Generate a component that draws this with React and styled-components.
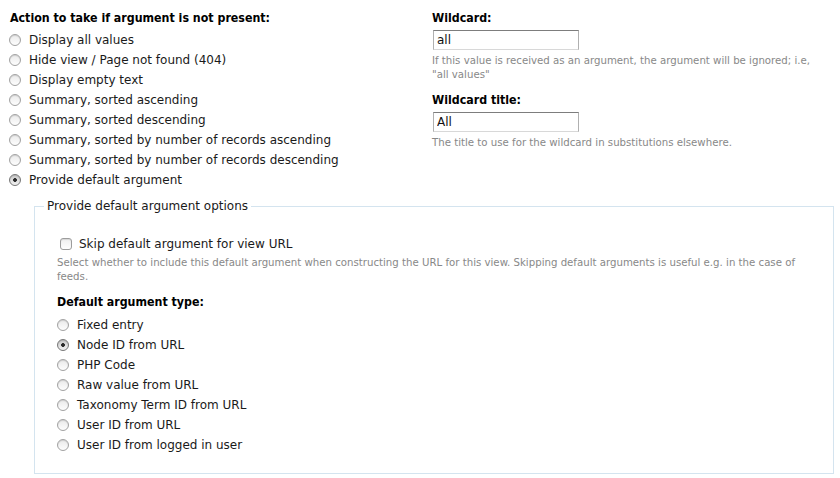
import React from "react";
import styled, { createGlobalStyle } from "styled-components";

const Global = createGlobalStyle`
  html, body { margin: 0; padding: 0; background: #fff; }
  body { font-family: "DejaVu Sans", Verdana, sans-serif; color: #1a1a1a; }
`;

const Page = styled.div`
  width: 840px;
  height: 478px;
  box-sizing: border-box;
  padding: 8px 6px 0 9px;
  overflow: hidden;
`;

const Top = styled.div`
  display: grid;
  grid-template-columns: 423px 1fr;
`;

const Column = styled.div`
  display: flex;
  flex-direction: column;
`;

const Label = styled.div`
  font-family: "DejaVu Sans Condensed", "DejaVu Sans", sans-serif;
  font-weight: bold;
  font-size: 12.3px;
  line-height: 20px;
  color: #000;
  margin-top: ${(p) => p.$mt || 0}px;
  margin-bottom: ${(p) => (p.$mb === undefined ? 2 : p.$mb)}px;
  padding-left: ${(p) => p.$pl || 0}px;
`;

const OptionList = styled.div`
  display: flex;
  flex-direction: column;
`;

const Option = styled.label`
  display: flex;
  align-items: center;
  height: 20px;
  font-size: 12px;
  gap: 8px;
  white-space: nowrap;
`;

const Radio = styled.span`
  flex: none;
  width: 12px;
  height: 12px;
  border-radius: 50%;
  box-sizing: border-box;
  border: 1px solid ${(p) => (p.$checked ? "#777" : "#a2a2a2")};
  background: ${(p) =>
    p.$checked
      ? "radial-gradient(circle at 50% 50%, #222 0, #333 1.6px, transparent 2.2px), linear-gradient(#c9c9c9, #f2f2f2)"
      : "linear-gradient(#eaeaea, #fdfdfd)"};
  box-shadow: inset 0 1px 1px rgba(0, 0, 0, 0.12);
`;

const Check = styled.span`
  flex: none;
  width: 12px;
  height: 12px;
  margin-left: 3px;
  border-radius: 3px;
  box-sizing: border-box;
  border: 1px solid #9c9c9c;
  background: linear-gradient(#eeeeee, #fdfdfd);
  box-shadow: inset 0 1px 1px rgba(0, 0, 0, 0.1);
`;

const TextInput = styled.input`
  width: 146px;
  height: 20px;
  box-sizing: border-box;
  margin: 0 0 0 1px;
  padding: 0 3px;
  font-family: inherit;
  font-size: 12px;
  color: #111;
  border: 1px solid #b0b0b0;
  border-top-color: #7d7d7d;
  border-bottom-color: #d8d8d8;
  outline: none;
  background: #fff;
`;

const Help = styled.div`
  font-size: 10.2px;
  line-height: 14px;
  color: #888;
  margin-top: ${(p) => (p.$mt === undefined ? 4 : p.$mt)}px;
  padding-right: ${(p) => p.$pr || 0}px;
`;

const Fieldset = styled.fieldset`
  margin: 9px 0 0 25px;
  padding: 21px 22px 18px 22px;
  border: 1px solid #d4e4ef;
  box-sizing: border-box;
  min-width: 0;
`;

const Legend = styled.legend`
  font-size: 12px;
  line-height: 14px;
  padding: 0 3px;
  margin-left: -13px;
`;

const CheckRow = styled.label`
  display: flex;
  align-items: center;
  gap: 7px;
  height: 20px;
  font-size: 12px;
`;

const actions = [
  ["Display all values", false],
  ["Hide view / Page not found (404)", false],
  ["Display empty text", false],
  ["Summary, sorted ascending", false],
  ["Summary, sorted descending", false],
  ["Summary, sorted by number of records ascending", false],
  ["Summary, sorted by number of records descending", false],
  ["Provide default argument", true],
];

const types = [
  ["Fixed entry", false],
  ["Node ID from URL", true],
  ["PHP Code", false],
  ["Raw value from URL", false],
  ["Taxonomy Term ID from URL", false],
  ["User ID from URL", false],
  ["User ID from logged in user", false],
];

export default function App() {
  return (
    <>
      <Global />
      <Page>
        <Top>
          <Column>
            <Label $pl={1}>Action to take if argument is not present:</Label>
            <OptionList>
              {actions.map(([t, c]) => (
                <Option key={t}>
                  <Radio $checked={c} />
                  {t}
                </Option>
              ))}
            </OptionList>
          </Column>
          <Column>
            <Label>Wildcard:</Label>
            <TextInput defaultValue="all" />
            <Help $pr={20}>
              If this value is received as an argument, the argument will be ignored; i.e, "all values"
            </Help>
            <Label $mt={8}>Wildcard title:</Label>
            <TextInput defaultValue="All" />
            <Help>The title to use for the wildcard in substitutions elsewhere.</Help>
          </Column>
        </Top>
        <Fieldset>
          <Legend>Provide default argument options</Legend>
          <CheckRow>
            <Check />
            Skip default argument for view URL
          </CheckRow>
          <Help $mt={2}>
            Select whether to include this default argument when constructing the URL for this view. Skipping default arguments is useful e.g. in the case of feeds.
          </Help>
          <Label $mt={8} $mb={3}>Default argument type:</Label>
          <OptionList>
            {types.map(([t, c]) => (
              <Option key={t}>
                <Radio $checked={c} />
                {t}
              </Option>
            ))}
          </OptionList>
        </Fieldset>
      </Page>
    </>
  );
}
